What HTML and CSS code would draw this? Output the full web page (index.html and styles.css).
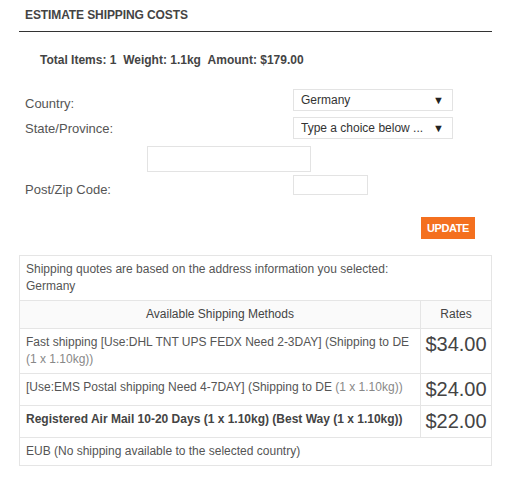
FILE: index.html
```html
<!DOCTYPE html>
<html lang="en">
<head>
<meta charset="utf-8">
<title>Estimate Shipping Costs</title>
<link rel="stylesheet" href="styles.css">
</head>
<body>
<div class="panel">
  <h3 class="panel-title">ESTIMATE SHIPPING COSTS</h3>
  <p class="totals">Total Items: 1&nbsp;&nbsp;Weight: 1.1kg&nbsp;&nbsp;Amount: $179.00</p>

  <form class="estimate-form">
    <div class="form-row row-country">
      <label class="form-label">Country:</label>
      <div class="select-wrap">
        <select class="form-select"><option>Germany</option></select>
      </div>
    </div>
    <div class="form-row row-state">
      <label class="form-label label-state">State/Province:</label>
      <div class="select-wrap">
        <select class="form-select"><option>Type a choice below ...</option></select>
      </div>
    </div>
    <div class="row-state-text">
      <input class="text-input state-input" type="text">
    </div>
    <div class="form-row row-zip">
      <label class="form-label">Post/Zip Code:</label>
      <input class="text-input zip-input" type="text">
    </div>
    <div class="row-actions">
      <button class="btn-update" type="button">UPDATE</button>
    </div>
  </form>

  <table class="quotes">
    <tr>
      <td colspan="2" class="quote-note">Shipping quotes are based on the address information you selected:<br>Germany</td>
    </tr>
    <tr class="quotes-head">
      <th class="col-method">Available Shipping Methods</th>
      <th class="col-rate">Rates</th>
    </tr>
    <tr>
      <td class="method">Fast shipping [Use:DHL TNT UPS FEDX Need 2-3DAY] (Shipping to DE <span class="qty">(1 x 1.10kg))</span></td>
      <td class="rate">$34.00</td>
    </tr>
    <tr>
      <td class="method">[Use:EMS Postal shipping Need 4-7DAY] (Shipping to DE <span class="qty">(1 x 1.10kg))</span></td>
      <td class="rate">$24.00</td>
    </tr>
    <tr>
      <td class="method method-best">Registered Air Mail 10-20 Days (1 x 1.10kg) (Best Way (1 x 1.10kg))</td>
      <td class="rate">$22.00</td>
    </tr>
    <tr>
      <td colspan="2" class="method">EUB (No shipping available to the selected country)</td>
    </tr>
  </table>
</div>
</body>
</html>
```

FILE: styles.css
```css
html, body {
  margin: 0;
  padding: 0;
  background: #ffffff;
}

body {
  font-family: "Liberation Sans", Arial, sans-serif;
  color: #555555;
}

.panel {
  width: 473px;
  margin-left: 19px;
}

.panel-title {
  margin: 0;
  padding: 8px 6px 8px;
  font-size: 12px;
  line-height: 15px;
  font-weight: bold;
  color: #444444;
  letter-spacing: -0.1px;
  border-bottom: 1px solid #333333;
}

.totals {
  margin: 0;
  padding: 20px 0 0 21px;
  font-size: 12px;
  line-height: 16px;
  font-weight: bold;
  color: #444444;
}

.estimate-form {
  display: flex;
  flex-direction: column;
  margin: 21px 0 0;
}

.form-row {
  display: grid;
  grid-template-columns: 268px auto;
  align-items: start;
  padding-left: 6px;
}

.row-state { margin-top: 6px; }
.row-state-text { margin-top: 7px; padding-left: 128px; display: flex; }
.row-zip { margin-top: 3px; height: 20px; }

.form-label {
  font-size: 13px;
  line-height: 15px;
  color: #555555;
  padding-top: 7px;
}

.label-state { padding-top: 4px; }

.select-wrap {
  position: relative;
  width: 160px;
  height: 22px;
}

.select-wrap::after {
  content: "\25BC";
  position: absolute;
  right: 9px;
  top: 5px;
  font-size: 11px;
  line-height: 12px;
  color: #222222;
  pointer-events: none;
}

.form-select {
  -webkit-appearance: none;
  appearance: none;
  display: block;
  box-sizing: border-box;
  width: 160px;
  height: 22px;
  margin: 0;
  padding: 0 0 0 7px;
  border: 1px solid #e3e3e3;
  border-radius: 0;
  background: #ffffff;
  font-family: "Liberation Sans", Arial, sans-serif;
  font-size: 12px;
  color: #333333;
  outline: none;
}

.text-input {
  box-sizing: border-box;
  margin: 0;
  padding: 0 4px;
  border: 1px solid #e3e3e3;
  border-radius: 0;
  background: #ffffff;
  font-family: "Liberation Sans", Arial, sans-serif;
  font-size: 12px;
  outline: none;
}

.state-input {
  width: 164px;
  height: 26px;
}

.zip-input {
  width: 75px;
  height: 20px;
}

.row-actions {
  display: flex;
  justify-content: flex-end;
  margin-top: 22px;
  padding-right: 17px;
}

.btn-update {
  width: 54px;
  height: 22px;
  margin: 0;
  padding: 0;
  border: none;
  border-radius: 0;
  background: #f4701f;
  color: #ffffff;
  font-family: "Liberation Sans", Arial, sans-serif;
  font-size: 11px;
  font-weight: bold;
  letter-spacing: -0.4px;
  line-height: 22px;
  text-align: center;
}

.quotes {
  width: 473px;
  margin-top: 16px;
  border-collapse: collapse;
  border: 1px solid #e5e5e5;
  font-size: 12px;
  line-height: 17px;
  color: #555555;
}

.quotes td,
.quotes th {
  border: 1px solid #e5e5e5;
  padding: 5px 6px;
  vertical-align: top;
  text-align: left;
}

.quotes-head th {
  background: #fafafa;
  font-weight: normal;
  color: #444444;
  text-align: center;
}

.quotes-head .col-rate {
  width: 58px;
}

.qty {
  color: #888888;
}

.method-best {
  font-weight: bold;
  color: #444444;
}

.quotes td.rate {
  font-size: 20px;
  line-height: 21px;
  color: #444444;
  text-align: center;
  padding: 5px 4px;
}
```
